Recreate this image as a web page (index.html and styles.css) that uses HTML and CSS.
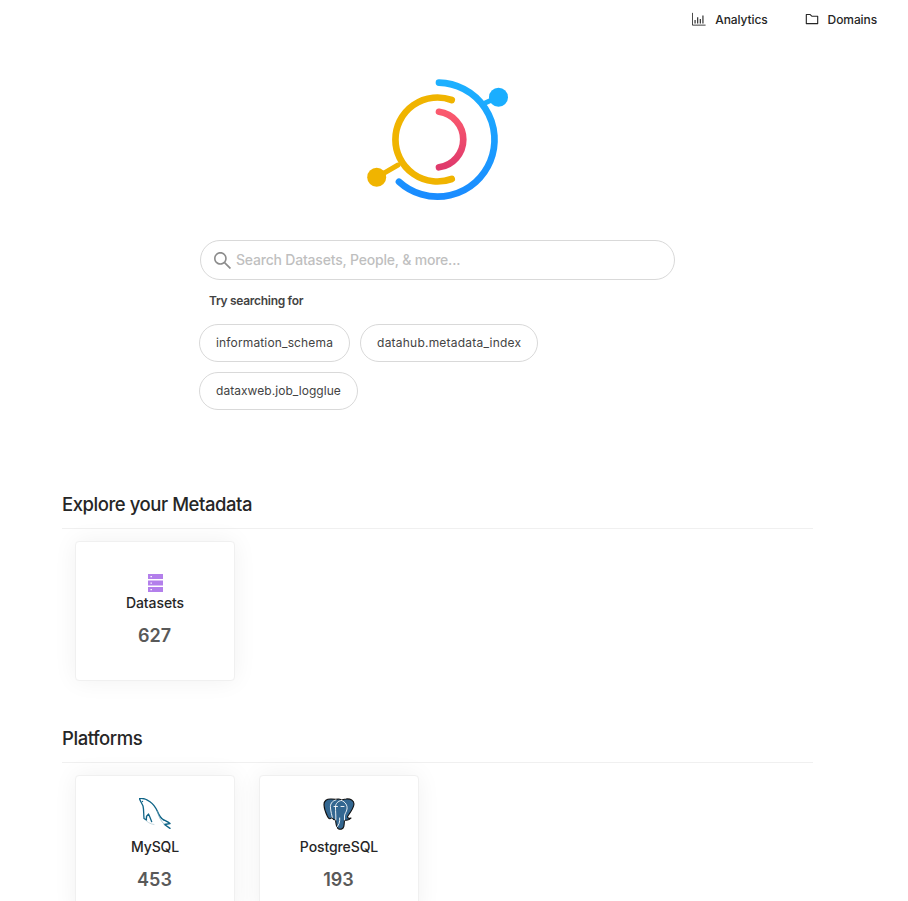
FILE: index.html
```html
<!DOCTYPE html>
<html lang="en">
<head>
<meta charset="utf-8">
<title>DataHub</title>
<link rel="stylesheet" href="styles.css">
</head>
<body>
<div class="page">
  <nav class="nav">
    <a class="nav-link">
      <svg class="nav-icon" viewBox="0 0 16 16" fill="none" stroke="#262626"><path d="M.5 1v14h15" stroke-width="1"/><path d="M3.500 9v4M6.500 6v7M9.500 8v5M12.500 4v9" stroke-width="1.300"/></svg>
      <span>Analytics</span>
    </a>
    <a class="nav-link">
      <svg class="nav-icon" viewBox="64 64 896 896" fill="#262626"><path d="M880 298.4H521L403.7 186.2a8.15 8.15 0 0 0-5.5-2.2H144c-17.7 0-32 14.3-32 32v592c0 17.7 14.3 32 32 32h736c17.7 0 32-14.3 32-32V330.4c0-17.7-14.3-32-32-32zM840 768H184V256h188.5l119.6 114.4H840V768z"/></svg>
      <span>Domains</span>
    </a>
  </nav>

  <section class="hero">
    <div class="logo-row">
      <svg class="logo" viewBox="0 0 145 130" fill="none" stroke-linecap="round">
        <defs>
          <linearGradient id="red" x1="0" y1="0" x2="0" y2="1"><stop offset="0" stop-color="#fb5a6e"/><stop offset="1" stop-color="#df3a6c"/></linearGradient>
          <linearGradient id="blue" x1="0" y1="0" x2="0" y2="1"><stop offset="0" stop-color="#1cb0ff"/><stop offset="1" stop-color="#1a8cff"/></linearGradient>
        </defs>
        <path d="M116 29L131 22" stroke="#1aaeff" stroke-width="5"/>
        <circle cx="131.500" cy="22.300" r="9.500" fill="#1aaeff"/>
        <path d="M72 7.700A57 57 0 1 1 32 106.700" stroke="url(#blue)" stroke-width="6.700"/>
        <path d="M31 90L9.700 102.300" stroke="#f0b400" stroke-width="5"/>
        <circle cx="9.700" cy="102.300" r="9.500" fill="#f0b400"/>
        <path d="M84.700 25A42 42 0 1 0 84.700 104" stroke="#f0b400" stroke-width="6.700"/>
        <path d="M72 36.800A28 28 0 0 1 72 92.300" stroke="url(#red)" stroke-width="6.700"/>
      </svg>
    </div>
    <div class="search">
      <svg class="search-icon" viewBox="64 64 896 896" fill="#8c8c8c"><path d="M909.6 854.5L649.9 594.8C690.2 542.7 712 479 712 412c0-80.2-31.3-155.4-87.9-212.1-56.6-56.7-132-87.9-212.1-87.9s-155.5 31.3-212.1 87.9C143.2 256.5 112 331.8 112 412c0 80.1 31.3 155.5 87.9 212.1C256.5 680.8 331.8 712 412 712c67 0 130.6-21.8 182.7-62l259.7 259.6a8.2 8.2 0 0 0 11.6 0l43.6-43.5a8.2 8.2 0 0 0 0-11.6zM570.4 570.4C528 612.7 471.8 636 412 636s-116-23.3-158.4-65.6C211.3 528 188 471.8 188 412s23.3-116.1 65.6-158.4C296 211.3 352.2 188 412 188s116.1 23.2 158.4 65.6S636 352.2 636 412s-23.3 116.1-65.6 158.4z"/></svg>
      <span class="placeholder">Search Datasets, People, &amp; more...</span>
    </div>
    <div class="try">Try searching for</div>
    <div class="chips">
      <a class="chip chip-info">information_schema</a>
      <a class="chip chip-wide">datahub.metadata_index</a>
      <a class="chip chip-narrow">dataxweb.job_logglue</a>
    </div>
  </section>

  <section class="section first">
    <h2 class="section-title">Explore your Metadata</h2>
    <div class="cards">
      <div class="card">
        <div class="card-icon">
          <svg class="db-icon" viewBox="0 0 15 18"><path fill="#b37feb" d="M0 0h15v5H0zM0 6.500h15v5H0zM0 13h15v5H0z"/><path fill="#fff" d="M2.500 2h1.400v1.200H2.500zM2.500 8.500h1.400v1.200H2.500zM2.500 15h1.400v1.200H2.500z"/></svg>
        </div>
        <div class="card-name">Datasets</div>
        <div class="card-count">627</div>
      </div>
    </div>
  </section>

  <section class="section">
    <h2 class="section-title">Platforms</h2>
    <div class="cards">
      <div class="card">
        <div class="card-logo">
          <svg class="platform-logo" viewBox="0 0 32 32" fill="none" stroke="#0f6487" stroke-linecap="round" stroke-linejoin="round">
            <path d="M5 20.500C8 24 11 26 15 26.500" stroke="#c6d8df" stroke-width="1"/>
            <path d="M.5 .5C4 0 8 1.500 11 3.700C15 6.500 17 10 18.500 13.500C20 17 21.500 20 24 21.500C27 23 29.500 24 31 25.500C29 25.800 27 26 25.500 26.500L31 30.300" stroke-width="1.400"/>
            <path d="M.5 .5C1 3 3 5.500 4 8C5 12 4.500 16 5 20.500L7.500 22C7 19 8 17 9.500 16C10.500 18 11.500 20.500 12.700 23.700" stroke-width="1.300"/>
            <path d="M18.500 13.500C19.500 18 21 22 25.500 26.500" stroke-width=".6" stroke="#6fa3b8"/>
            <circle cx="3.500" cy="3.500" r=".7" fill="#0f6487" stroke="none"/>
          </svg>
        </div>
        <div class="card-name">MySQL</div>
        <div class="card-count">453</div>
      </div>
      <div class="card">
        <div class="card-logo">
          <svg class="platform-logo" viewBox="0 0 32 32">
            <path fill="#336791" stroke="#111" stroke-width="1.100" stroke-linejoin="round" d="M8 1C4 .8 .8 2.600 1 7c.2 4 2 8.500 3.500 11.500C5.700 21 7.500 21.500 9 19.500C10 21.500 11 22 12.500 22C13 25 13 29 15 30.500C17 31.800 20 31.500 20.800 28.500C21.300 26.500 21.200 24.500 21.500 22C23 22.500 25 22 26 21.500L28 20C25.500 20.500 24.500 20 24.500 18.500C27 15 30.800 10 31 6C31 2.500 27.500 .5 23 1C21 1.100 20 1.600 18.500 2C17 1.100 15 .8 13 1.400C11.500 1.200 9.500 .9 8 1Z"/>
            <path fill="none" stroke="#fff" stroke-width=".9" stroke-linecap="round" d="M13 1.800C9 3 7 6 7.500 10C7.800 14 9 17.500 9.300 19.500M18.500 2.400C15 3 12.500 5.500 12.500 9C12.500 14 13 18 12.800 22M18.500 2.400C22.500 4 24.500 7.500 24 11C23.600 14 21.800 15 21.500 18C21.400 19.500 21.500 21 21.500 22M13 30C16 27.500 17 24 16.700 20M11 8.500h3.500M21 8.500h-3"/>
          </svg>
        </div>
        <div class="card-name">PostgreSQL</div>
        <div class="card-count">193</div>
      </div>
    </div>
  </section>
</div>
</body>
</html>
```

FILE: styles.css
```css
* { box-sizing: border-box; }
html, body { margin: 0; padding: 0; background: #fff; }
body { font-family: Inter, "Open Sans", "Noto Sans", sans-serif; color: #262626; }
.page { height: 100vh; overflow: hidden; }

.nav { display: flex; justify-content: flex-end; gap: 37px; height: 40px; padding: 12px 31px 0 0; }
.nav-link { display: flex; align-items: flex-start; gap: 9px; font-size: 12px; font-weight: 500; line-height: 16px; letter-spacing: -.1px; }
.nav-icon { width: 14px; height: 14px; display: block; }

.hero { width: 476px; margin-left: 199px; }
.logo-row { height: 200px; margin-left: 168px; padding-top: 35px; }
.logo { display: block; width: 145px; height: 130px; }
.search { display: flex; align-items: center; gap: 4px; width: 475px; height: 40px; margin-left: 1px; padding: 0 0 1px 12px; border: 1px solid #d9d9d9; border-radius: 20px; background: #fff; }
.search-icon { width: 19px; height: 19px; margin-top: 1px; }
.placeholder { font-size: 14px; color: #bfbfbf; font-weight: 500; letter-spacing: -.2px; }
.try { margin: 13px 0 0 10px; font-size: 12px; line-height: 16px; font-weight: 600; color: #434343; letter-spacing: -.3px; }
.chips { display: flex; flex-wrap: wrap; gap: 10px; margin-top: 15px; }
.chip { display: flex; align-items: center; height: 38px; padding: 0 16px 2px; border: 1px solid #d9d9d9; border-radius: 19px; font-size: 12px; font-weight: 400; color: #434343; }
.chip-info { letter-spacing: .15px; }
.chip-wide { letter-spacing: .22px; }
.chip-narrow { letter-spacing: .05px; }

.section { width: 751px; margin-left: 62px; margin-top: 43px; }
.section.first { margin-top: 80px; }
.section-title { margin: 0; height: 39px; font-size: 18.500px; line-height: 28px; font-weight: 550; color: #262626; border-bottom: 1px solid #f0f0f0; letter-spacing: -.45px; }
.cards { display: flex; gap: 24px; padding: 12px 0 0 13px; }
.card { display: flex; flex-direction: column; align-items: center; justify-content: center; width: 160px; height: 140px; border: 1px solid #f0f0f0; border-radius: 4px; background: #fff; box-shadow: 0 0 24px rgba(0, 0, 0, .06); flex: none; }
.card-icon { height: 18px; }
.db-icon { display: block; width: 15px; height: 18px; }
.card-logo { height: 38px; }
.platform-logo { display: block; width: 32px; height: 32px; }
.card-name { font-size: 14px; line-height: 22px; font-weight: 550; color: #262626; letter-spacing: -.1px; }
.card-count { margin-top: 10px; padding-right: 1px; font-size: 18px; line-height: 24px; font-weight: 600; color: #595959; }
```
